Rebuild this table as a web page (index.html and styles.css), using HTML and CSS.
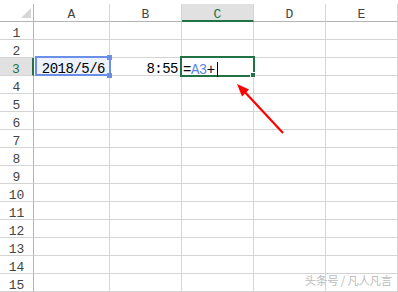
FILE: index.html
```html
<!DOCTYPE html>
<html>
<head>
<meta charset="utf-8">
<link rel="stylesheet" href="styles.css">
</head>
<body>
<div class="page">
  <div class="sheet">
    <div class="corner"><svg width="33" height="17" viewBox="0 0 33 17"><polygon points="31,4 31,14 21,14" fill="#d6d6d6"/></svg></div>
    <div class="ch">A</div><div class="ch">B</div><div class="ch ch-active">C</div><div class="ch">D</div><div class="ch">E</div>

    <div class="rh">1</div><div class="c"></div><div class="c"></div><div class="c"></div><div class="c"></div><div class="c"></div>
    <div class="rh">2</div><div class="c"></div><div class="c"></div><div class="c"></div><div class="c"></div><div class="c"></div>
    <div class="rh rh-active">3</div>
    <div class="c c-ref"><div class="ref-box"></div><span class="h h-top"></span><span class="h h-bot"></span><span class="val">2018/5/6</span></div>
    <div class="c c-num"><span class="val">8:55</span></div>
    <div class="c c-edit"><div class="edit-box"></div><span class="fill-h"></span><span class="val">=<span class="blue">A3</span>+<span class="caret"></span></span></div>
    <div class="c"></div><div class="c"></div>
    <div class="rh">4</div><div class="c"></div><div class="c"></div><div class="c"></div><div class="c"></div><div class="c"></div>
    <div class="rh">5</div><div class="c"></div><div class="c"></div><div class="c"></div><div class="c"></div><div class="c"></div>
    <div class="rh">6</div><div class="c"></div><div class="c"></div><div class="c"></div><div class="c"></div><div class="c"></div>
    <div class="rh">7</div><div class="c"></div><div class="c"></div><div class="c"></div><div class="c"></div><div class="c"></div>
    <div class="rh">8</div><div class="c"></div><div class="c"></div><div class="c"></div><div class="c"></div><div class="c"></div>
    <div class="rh">9</div><div class="c"></div><div class="c"></div><div class="c"></div><div class="c"></div><div class="c"></div>
    <div class="rh">10</div><div class="c"></div><div class="c"></div><div class="c"></div><div class="c"></div><div class="c"></div>
    <div class="rh">11</div><div class="c"></div><div class="c"></div><div class="c"></div><div class="c"></div><div class="c"></div>
    <div class="rh">12</div><div class="c"></div><div class="c"></div><div class="c"></div><div class="c"></div><div class="c"></div>
    <div class="rh">13</div><div class="c"></div><div class="c"></div><div class="c"></div><div class="c"></div><div class="c"></div>
    <div class="rh">14</div><div class="c"></div><div class="c"></div><div class="c"></div><div class="c"></div><div class="c"></div>
    <div class="rh">15</div><div class="c"></div><div class="c"></div><div class="c"></div><div class="c"></div><div class="c"></div>
  </div>
  <svg class="arrow" width="398" height="292" viewBox="0 0 398 292">
    <line x1="283" y1="133" x2="242" y2="89" stroke="#ff0000" stroke-width="2.2"/>
    <polygon points="237,84 249,89.5 242,96.5" fill="#ff0000"/>
  </svg>
  <div class="wm">头条号 / 凡人凡言</div>
</div>
</body>
</html>
```

FILE: styles.css
```css
html, body {
  margin: 0;
  padding: 0;
  background: #fff;
}
.page {
  position: relative;
  width: 398px;
  height: 292px;
  overflow: hidden;
}
.sheet {
  padding-top: 4px;
  display: grid;
  grid-template-columns: 34px 76px 72px 72px 72px 72px;
  grid-auto-rows: 18px;
  font-family: "Liberation Mono", "DejaVu Sans Mono", monospace;
}
.corner, .ch, .rh, .c {
  box-sizing: border-box;
  border-right: 1px solid #d4d4d4;
  border-bottom: 1px solid #d4d4d4;
}
.corner {
  border-right-color: #b4b4b4;
  border-bottom-color: #b4b4b4;
}
.corner svg { display: block; }
.ch {
  border-bottom-color: #b4b4b4;
  text-align: center;
  font-size: 13px;
  line-height: 15px;
  padding-top: 3px;
  color: #444;
}
.ch-active {
  background: #e1e1e1;
  border-bottom: 2px solid #217346;
  color: #217346;
}
.rh {
  border-right-color: #b4b4b4;
  text-align: center;
  font-size: 13px;
  line-height: 15px;
  padding-top: 4px;
  color: #444;
}
.rh-active {
  background: #e1e1e1;
  border-right: 2px solid #217346;
  color: #217346;
}
.c {
  position: relative;
  font-size: 14px;
  letter-spacing: -0.5px;
  line-height: 15px;
  padding-top: 4px;
  color: #000;
  white-space: nowrap;
}
.val {
  position: relative;
  z-index: 2;
}
.c-ref, .c-num {
  text-align: right;
  padding-right: 3px;
}
.c-ref { padding-right: 4px; }
.ref-box {
  position: absolute;
  left: 1px;
  top: -2px;
  width: 76px;
  height: 20px;
  box-sizing: border-box;
  border: 2px solid #6b8fe6;
  background: #eef2fd;
  z-index: 1;
}
.h {
  position: absolute;
  left: 73px;
  width: 5px;
  height: 5px;
  background: #6b8fe6;
  z-index: 3;
}
.h-top { top: -3px; }
.h-bot { top: 15px; }
.c-edit {
  padding-left: 1px;
}
.edit-box {
  position: absolute;
  left: -2px;
  top: -2px;
  width: 75px;
  height: 21px;
  box-sizing: border-box;
  border: 2px solid #217346;
  z-index: 1;
}
.fill-h {
  position: absolute;
  left: 68px;
  top: 14px;
  width: 4px;
  height: 4px;
  background: #217346;
  border: 1px solid #fff;
  z-index: 3;
}
.blue { color: #5b84e8; }
.caret {
  display: inline-block;
  width: 1px;
  height: 15px;
  background: #000;
  vertical-align: -3px;
  margin-left: 2px;
}
.arrow {
  position: absolute;
  left: 0;
  top: 0;
  pointer-events: none;
}
.wm {
  position: absolute;
  right: 6px;
  top: 273px;
  font-family: "Noto Sans CJK SC", sans-serif;
  font-size: 11.5px;
  line-height: 14px;
  color: #bcbcbc;
  text-shadow: 0 0 2px #fff;
  letter-spacing: -0.3px;
}
```
